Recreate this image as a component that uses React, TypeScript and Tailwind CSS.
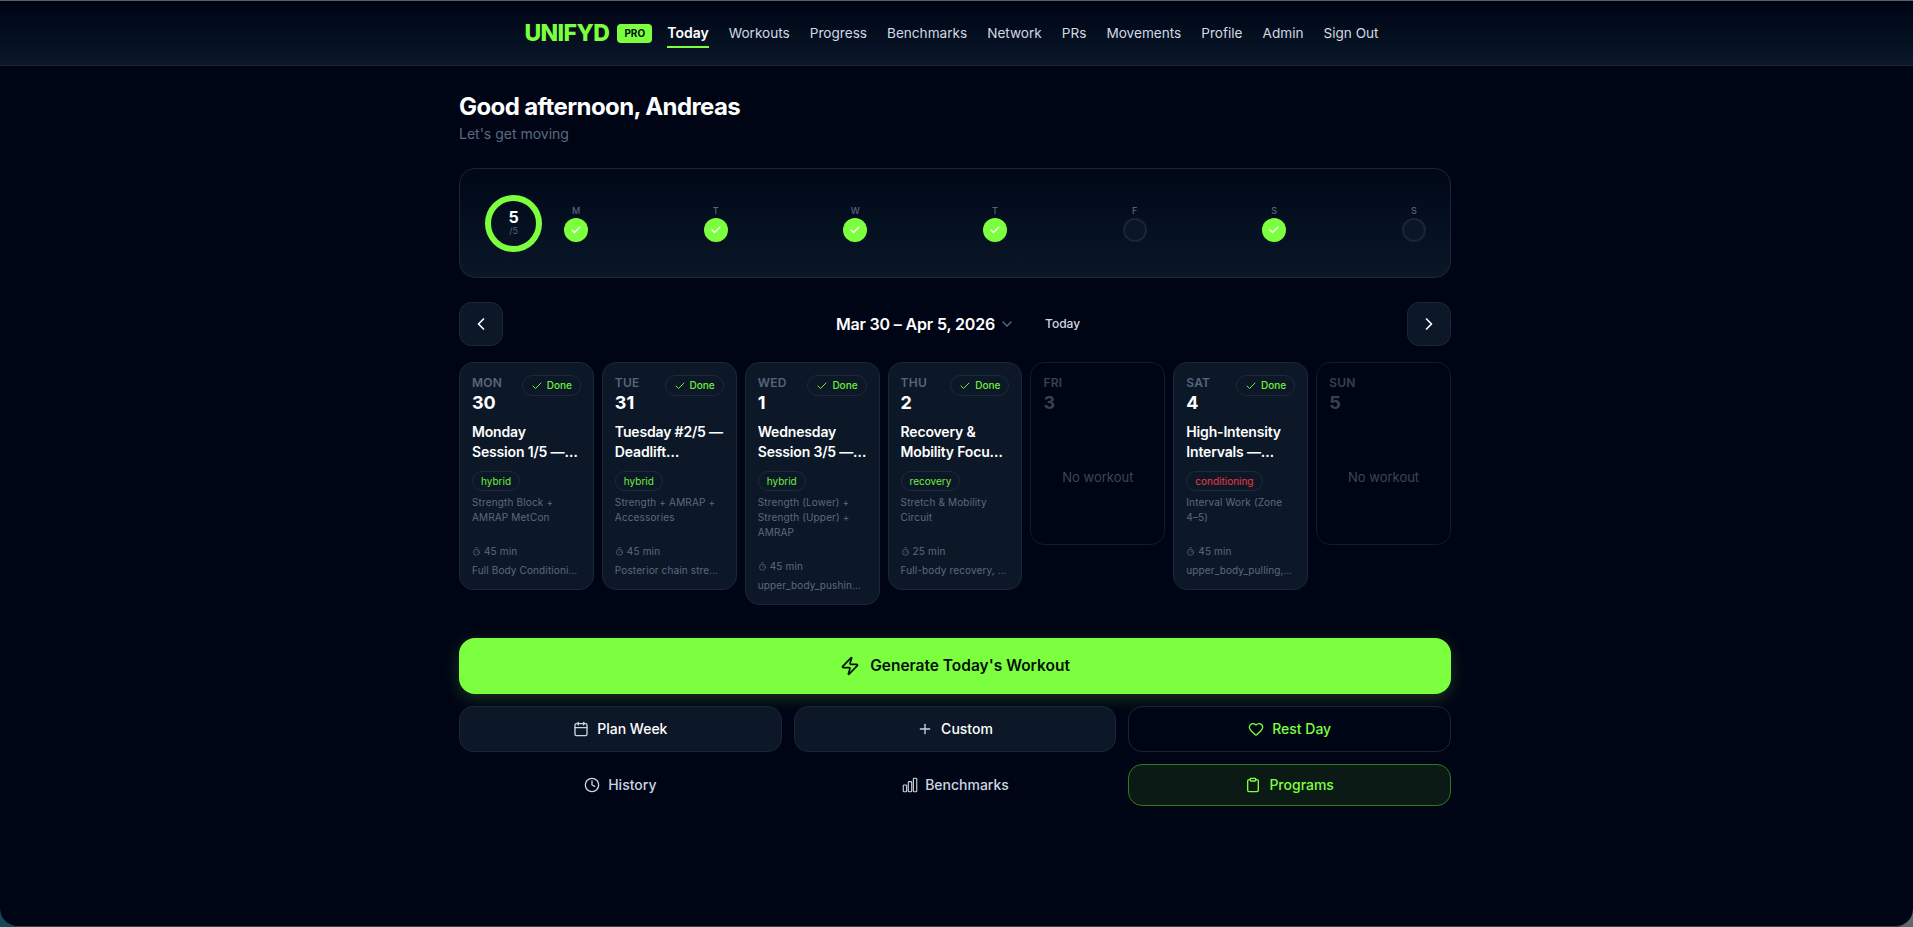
import React from 'react';
import { Calendar, Check, ChevronDown, ChevronLeft, ChevronRight, Clipboard, Clock, Heart, Plus, Timer, Zap } from 'lucide-react';
import { HiOutlineChartBar } from 'react-icons/hi2';

interface DayCard {
  day: string;
  date: string;
  title?: string;
  tag?: string;
  tagRed?: boolean;
  blocks?: string;
  mins?: number;
  focus?: string;
}

const navLinks = ['Workouts', 'Progress', 'Benchmarks', 'Network', 'PRs', 'Movements', 'Profile', 'Admin', 'Sign Out'];

const weekDots = [
  { label: 'M', done: true },
  { label: 'T', done: true },
  { label: 'W', done: true },
  { label: 'T', done: true },
  { label: 'F', done: false },
  { label: 'S', done: true },
  { label: 'S', done: false },
];

const days: DayCard[] = [
  { day: 'MON', date: '30', title: 'Monday Session 1/5 — Full Body Conditioning', tag: 'hybrid', blocks: 'Strength Block + AMRAP MetCon', mins: 45, focus: 'Full Body Conditioning and Strength' },
  { day: 'TUE', date: '31', title: 'Tuesday #2/5 — Deadlift Accessories Session', tag: 'hybrid', blocks: 'Strength + AMRAP + Accessories', mins: 45, focus: 'Posterior chain strength and power' },
  { day: 'WED', date: '1', title: 'Wednesday Session 3/5 — Push and Legs', tag: 'hybrid', blocks: 'Strength (Lower) + Strength (Upper) + AMRAP', mins: 45, focus: 'upper_body_pushing, lower_body' },
  { day: 'THU', date: '2', title: 'Recovery & Mobility Focus Session', tag: 'recovery', blocks: 'Stretch & Mobility Circuit', mins: 25, focus: 'Full-body recovery, mobility work' },
  { day: 'FRI', date: '3' },
  { day: 'SAT', date: '4', title: 'High-Intensity Intervals — Zone Work Session', tag: 'conditioning', tagRed: true, blocks: 'Interval Work (Zone 4–5)', mins: 45, focus: 'upper_body_pulling,conditioning' },
  { day: 'SUN', date: '5' },
];

const WorkoutCard: React.FC<{ card: DayCard }> = ({ card }) => {
  if (!card.title) {
    return (
      <div className="h-[183px] rounded-[14px] border border-[#111b29] px-3 pt-[13px]">
        <div className="text-xs leading-[14px] font-semibold tracking-[0.02em] text-[#354152]">{card.day}</div>
        <div className="text-lg leading-[25px] font-bold text-[#354152]">{card.date}</div>
        <div className="mt-[52px] text-center text-[13px] leading-5 text-[#3a4656]">No workout</div>
      </div>
    );
  }
  return (
    <div className="rounded-[14px] border border-[#1a2738] bg-[#0c1828] px-3 pt-[13px] pb-[11px]">
      <div className="flex items-start justify-between">
        <div>
          <div className="text-xs leading-[14px] font-semibold tracking-[0.02em] text-[#56657a]">{card.day}</div>
          <div className="text-lg leading-[25px] font-bold text-white">{card.date}</div>
        </div>
        <div className="-mt-px flex h-[21px] items-center gap-1 rounded-full border border-[#1c2a3b] px-2 text-[10px] font-medium text-[#6fee3a]">
          <Check size={12} strokeWidth={2} />
          Done
        </div>
      </div>
      <div className="mt-[7px] line-clamp-2 text-sm leading-5 font-semibold tracking-[-0.012em] text-white">{card.title}</div>
      <div className="mt-[9px] w-fit rounded-full border border-[#1c2a3b] px-2 text-[10px] leading-[18px]">
        <span className={card.tagRed ? 'text-[#f0383f]' : 'text-[#6fee3a]'}>{card.tag}</span>
      </div>
      <div className="mt-1 text-[10px] leading-[15px] tracking-[0.015em] text-[#5b6a7f]">{card.blocks}</div>
      <div className="mt-[19px] flex items-center gap-[3px] text-[10px] leading-[15px] tracking-[0.015em] text-[#5b6a7f]">
        <Timer size={9} strokeWidth={2} />
        {card.mins} min
      </div>
      <div className="mt-1 truncate text-[10px] leading-[15px] tracking-[0.0125em] text-[#5b6a7f]">{card.focus}</div>
    </div>
  );
};

export default function App() {
  return (
    <div className="h-screen w-full overflow-hidden bg-gradient-to-r from-[#124b57] to-[#5d6b6e] font-['Inter',sans-serif]">
      <div className="flex h-full flex-col overflow-hidden rounded-b-[18px] border-t border-b border-t-[#5f6163] border-b-[#3a3f4a] bg-[#000515]">
        <header className="flex h-[65px] shrink-0 items-center justify-center border-b border-[#1a2636] bg-gradient-to-b from-[#000515] to-[#0c1829] pr-[10px]">
          <div className="mr-[15px] flex items-center gap-2">
            <span className="text-[23px] font-extrabold tracking-tight text-[#7cff3f]">UNIFYD</span>
            <span className="flex h-[19px] w-[35px] items-center justify-center rounded bg-[#7cff3f] text-[10px] font-bold text-[#03100a]">PRO</span>
          </div>
          <nav className="flex items-center gap-5 text-[13.6px]">
            <a className="relative text-sm font-semibold text-white">
              Today
              <span className="absolute right-0 -bottom-[5px] left-0 h-0.5 bg-[#7cff3f]" />
            </a>
            {navLinks.map((link) => (
              <a key={link} className="font-normal text-[#d3d9e2]">{link}</a>
            ))}
          </nav>
        </header>

        <main className="ml-[459px] w-[992px] pt-[25px]">
          <h1 className="text-2xl font-bold tracking-tight text-white">Good afternoon, Andreas</h1>
          <p className="mt-px text-sm text-[#5b6b80]">Let's get moving</p>

          <section className="mt-6 flex h-[110px] items-center gap-[22px] rounded-2xl border border-[#1a2636] bg-gradient-to-b from-[#010818] to-[#0b1727] px-6">
            <div className="ml-px flex h-[57px] w-[57px] shrink-0 flex-col items-center justify-center rounded-full border-[6px] border-[#7cff3f]">
              <span className="text-base leading-4 font-bold text-white">5</span>
              <span className="text-[9px] leading-3 text-[#56657a]">/5</span>
            </div>
            <div className="flex flex-1 justify-between">
              {weekDots.map((dot, i) => (
                <div key={i} className="flex w-6 flex-col items-center">
                  <span className="text-[9px] leading-[14px] font-medium text-[#56657a]">{dot.label}</span>
                  {dot.done ? (
                    <span className="flex h-6 w-6 items-center justify-center rounded-full bg-[#7cff3f] text-white">
                      <Check size={12} strokeWidth={2.5} />
                    </span>
                  ) : (
                    <span className="h-6 w-6 rounded-full border-2 border-[#1a2636] bg-[#0b1727]" />
                  )}
                </div>
              ))}
            </div>
          </section>

          <section className="mt-6 flex items-center justify-between">
            <button className="flex h-11 w-11 items-center justify-center rounded-xl border border-[#1a2636] bg-[#0c1828] text-white">
              <ChevronLeft size={20} />
            </button>
            <div className="ml-[6px] flex items-center">
              <span className="text-base font-semibold tracking-[-0.01em] text-white">Mar 30 – Apr 5, 2026</span>
              <ChevronDown size={16} className="ml-1 text-[#5b6b80]" />
              <span className="ml-[30px] text-xs font-medium text-[#d3d9e2]">Today</span>
            </div>
            <button className="flex h-11 w-11 items-center justify-center rounded-xl border border-[#1a2636] bg-[#0c1828] text-white">
              <ChevronRight size={20} />
            </button>
          </section>

          <section className="mt-4 grid grid-cols-7 items-start gap-2">
            {days.map((card) => (
              <WorkoutCard key={card.day} card={card} />
            ))}
          </section>

          <button className="mt-[33px] flex h-14 w-full items-center justify-center gap-2.5 rounded-2xl bg-[#7cff3f] text-[15.5px] font-semibold text-[#03100a] shadow-[0_4px_16px_rgba(124,255,63,0.2)]">
            <Zap size={20} />
            Generate Today's Workout
          </button>

          <div className="mt-3 grid grid-cols-3 gap-3 text-sm font-medium">
            <button className="flex h-[46px] items-center justify-center gap-2 rounded-[14px] border border-[#1a2636] bg-[#0c1828] text-white">
              <Calendar size={16} className="text-[#cbd5e1]" />
              Plan Week
            </button>
            <button className="flex h-[46px] items-center justify-center gap-2 rounded-[14px] border border-[#1a2636] bg-[#0c1828] text-white">
              <Plus size={16} className="text-[#cbd5e1]" />
              Custom
            </button>
            <button className="flex h-[46px] items-center justify-center gap-2 rounded-[14px] border border-[#1a2636] text-[#7cff3f]">
              <Heart size={16} />
              Rest Day
            </button>
            <button className="flex h-[42px] items-center justify-center gap-2 rounded-[14px] text-[#cbd5e1]">
              <Clock size={16} />
              History
            </button>
            <button className="flex h-[42px] items-center justify-center gap-1.5 rounded-[14px] text-[#cbd5e1]">
              <HiOutlineChartBar size={18} />
              Benchmarks
            </button>
            <button className="flex h-[42px] items-center justify-center gap-2 rounded-[14px] border border-[#2f7a1f] bg-[#0c1a16] text-[#7cff3f]">
              <Clipboard size={16} />
              Programs
            </button>
          </div>
        </main>
      </div>
    </div>
  );
}
